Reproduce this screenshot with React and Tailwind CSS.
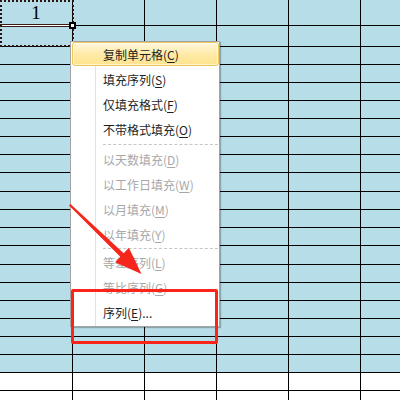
import React from "react";

const BLUE_ROWS = 20;
// row heights (incl. bottom grid line); first two rows are the taller header-ish rows
const rowHeights = [26, 21, 18, 18, 18, 18, 18, 18, 18, 19, 18, 18, 18, 19, 18, 18, 18, 18, 18, 18, 18, 18];
const colWidths = [73, 72, 72, 72, 72, 40];

const menuItems = [
  { label: "复制单元格", key: "C", active: true },
  { label: "填充序列", key: "S" },
  { label: "仅填充格式", key: "F" },
  { label: "不带格式填充", key: "O" },
  { sep: 5 },
  { label: "以天数填充", key: "D", disabled: true },
  { label: "以工作日填充", key: "W", disabled: true },
  { label: "以月填充", key: "M", disabled: true },
  { label: "以年填充", key: "Y", disabled: true },
  { sep: 3 },
  { label: "等差序列", key: "L", disabled: true },
  { label: "等比序列", key: "G", disabled: true },
  { label: "序列", key: "E", suffix: "..." },
];

function Sheet() {
  return (
    <div className="flex flex-col">
      {rowHeights.map((h, r) => (
        <div key={r} className="flex shrink-0" style={{ height: h }}>
          {colWidths.map((w, c) => (
            <div
              key={c}
              style={{ width: w }}
              className={
                "shrink-0 border-r border-b border-black " +
                (r < BLUE_ROWS ? "bg-[#b7dde8]" : "bg-white") +
                (r === 0 && c === 0 ? " flex items-center justify-center border-b-0" : "")
              }
            >
              {r === 0 && c === 0 && (
                <span className="font-['Liberation_Serif',serif] text-[19px] leading-none text-black pb-[2px]">1</span>
              )}
            </div>
          ))}
        </div>
      ))}
    </div>
  );
}

function MenuItem({ item }) {
  if (item.sep) {
    return (
      <div className="flex items-center pl-[32px] pr-[1px]" style={{ height: item.sep }}>
        <div className="w-full border-t border-dashed border-[#c6c6c6]" />
      </div>
    );
  }
  return (
    <div className="relative h-[25px] flex items-center pl-[32px]">
      {item.active && (
        <div className="absolute left-[1px] right-0 top-0 bottom-[1px] rounded-[3px] border border-[#efc65a] bg-gradient-to-b from-[#fff7dc] via-[#ffeaa8] to-[#ffe38e] shadow-[inset_0_0_0_1px_rgba(255,255,255,0.6)]" />
      )}
      <span
        className={
          "relative text-[12px] leading-none font-['Noto_Sans_CJK_SC','Microsoft_YaHei',sans-serif] " +
          (item.disabled ? "text-[#a8a8a8]" : "text-[#1e1e1e]")
        }
      >
        {item.label}(<span className="underline underline-offset-2">{item.key}</span>){item.suffix}
      </span>
    </div>
  );
}

export default function App() {
  return (
    <div className="relative w-[400px] h-[400px] overflow-hidden bg-white">
      <Sheet />

      {/* selection: double bottom border, marching ants, fill handle */}
      <div className="absolute left-0 top-[24px] w-[72px] h-[3px] border-y border-[#3b1c14] bg-white" />
      <div className="absolute left-0 top-0 w-[74px] h-[47px] border-2 border-dotted border-[#2a1410]" />
      <div className="absolute left-[69px] top-[22px] w-[7px] h-[7px] bg-black flex items-center justify-center">
        <div className="w-[3px] h-[3px] bg-white" />
      </div>

      {/* context menu */}
      <div className="absolute left-[70px] top-[41px] w-[150px] bg-white border border-[#a3a3a3] pb-[1px] shadow-[1px_1px_1px_rgba(0,0,0,0.25)]">
        <div className="absolute left-[24px] top-0 bottom-0 w-px bg-[#e2e2e2]" />
        {menuItems.map((it, i) => (
          <MenuItem key={i} item={it} />
        ))}
      </div>

      {/* red highlight box */}
      <div className="absolute left-[71px] top-[289px] w-[147px] h-[55px] border-[3px] border-[#fa2419] rounded-[2px]" />

      {/* red arrow */}
      <svg className="absolute left-0 top-0 pointer-events-none" width="400" height="400" viewBox="0 0 400 400">
        <polygon
          points="69,205.5 70.5,204 123.7,253.2 128.9,247.7 141.5,274 115.1,262.3 120.3,256.8"
          fill="#f5261b"
        />
      </svg>
    </div>
  );
}
